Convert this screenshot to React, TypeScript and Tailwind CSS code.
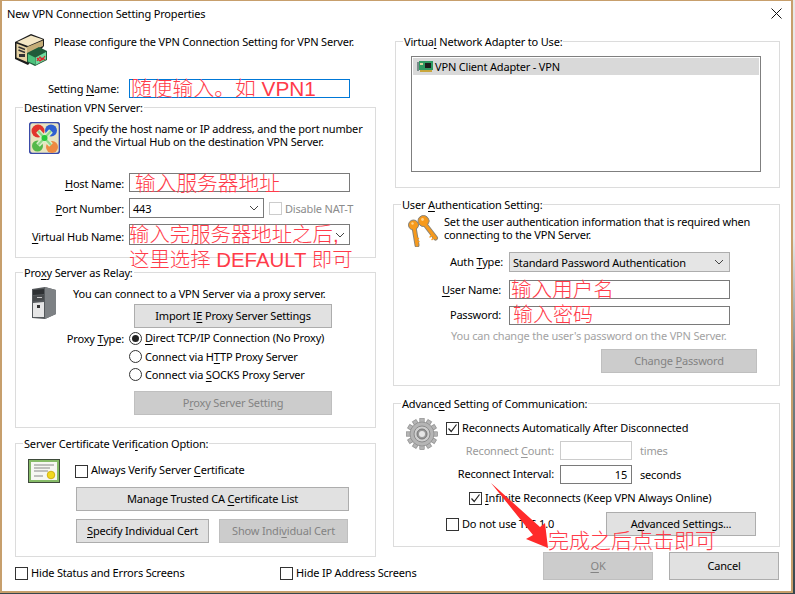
import React from "react";

const U = ({ children }: { children: React.ReactNode }) => <u className="underline underline-offset-[2px] decoration-1">{children}</u>;

const Note = ({ children, className = "" }: { children: React.ReactNode; className?: string }) => (
  <span className={"font-['Liberation_Sans','Noto_Sans_CJK_SC',sans-serif] font-light tracking-normal text-[#ff3b4a] whitespace-nowrap leading-[19px] " + className}>{children}</span>
);

const Group = ({ label, labelLeft = "left-[7px]", className = "", children }: { label: React.ReactNode; labelLeft?: string; className?: string; children?: React.ReactNode }) => (
  <div className={"relative border border-[#dcdcdc] " + className}>
    <div className={"absolute -top-[7px] bg-[#ffffff] px-[1px] whitespace-nowrap " + labelLeft}>{label}</div>
    {children}
  </div>
);

const Check = ({ checked = false, disabled = false }: { checked?: boolean; disabled?: boolean }) => (
  <div className={"w-[13px] h-[13px] shrink-0 border flex items-center justify-center " + (disabled ? "border-[#cccccc]" : "border-[#333333]")}>
    {checked && (
      <svg width="11" height="11" viewBox="0 0 11 11" fill="none">
        <path d="M1.5 5.5 L4.2 8.5 L9.5 1.5" stroke="#222222" strokeWidth="1.2" />
      </svg>
    )}
  </div>
);

const Radio = ({ on = false }: { on?: boolean }) => (
  <div className="w-[13px] h-[13px] shrink-0 rounded-full border border-[#333333] flex items-center justify-center">
    {on && <div className="w-[7px] h-[7px] rounded-full bg-[#222222]" />}
  </div>
);

const Btn = ({ children, disabled = false, className = "" }: { children: React.ReactNode; disabled?: boolean; className?: string }) => (
  <div className={"flex items-center justify-center border whitespace-nowrap pb-[2px] " + (disabled ? "bg-[#cccccc] border-[#bfbfbf] text-[#838383] " : "bg-[#e1e1e1] border-[#adadad] text-[#000000] ") + className}>
    <span>{children}</span>
  </div>
);

const Chevron = () => (
  <svg width="10" height="6" viewBox="0 0 10 6" fill="none" className="shrink-0">
    <path d="M1 1 L5 5 L9 1" stroke="#444444" strokeWidth="1" />
  </svg>
);

const ServerIcon = () => (
  <svg width="32" height="32" viewBox="0 0 32 32" className="shrink-0">
    <path d="M0 8 L16 0 L29 5 L29 12 L13 31 L0 25Z" fill="#1c1c1c" />
    <path d="M2 8 L16 1.5 L28 5.5 L13 12Z" fill="#f3e6c4" />
    <path d="M1.5 9.5 L12 13.5 L12 28 L1.5 23.5Z" fill="#e6d3a4" />
    <path d="M12 13 L28 6.5 L28 12 L12 20Z" fill="#c4ad78" />
    <path d="M3.5 13 L10 15.5 M3.5 16 L10 18.5" stroke="#333" strokeWidth="1.4" />
    <rect x="4" y="20" width="6" height="3" fill="#333" />
    <path d="M12 19 L24 13 L32 17 L32 26 L20 32 L12 28Z" fill="#1f5c3a" />
    <path d="M13 20 L20 23.5 L20 30.5 L13 27.5Z" fill="#4cc27c" />
    <path d="M20.5 23.5 L31 18 L31 25.5 L20.5 31Z" fill="#6fdc9e" />
    <path d="M22 27 L25 23 L27 26 L30 22 M22 24 L25 27 L27 24 L30 26" stroke="#e0202a" strokeWidth="1.2" fill="none" />
  </svg>
);

const HubIcon = () => (
  <svg width="31" height="32" viewBox="0 0 31 32" className="shrink-0">
    <rect x="0.5" y="0.5" width="30" height="31" rx="3" fill="#e9e4c0" stroke="#3a4aa8" strokeWidth="1.6" />
    <circle cx="9" cy="9" r="6.5" fill="#e2342d" />
    <circle cx="22" cy="8.5" r="6" fill="#2f5fd0" />
    <circle cx="8.5" cy="24" r="5.5" fill="#55b84a" />
    <circle cx="23" cy="25" r="6" fill="#ee8a42" />
    <path d="M9 9 L22 23 M22 9 L9 23" stroke="#d9efc8" strokeWidth="5" />
    <path d="M9 9 L22 23 M22 9 L9 23" stroke="#8fd88a" strokeWidth="2" />
    <circle cx="15.5" cy="16" r="3" fill="#27c83a" />
  </svg>
);

const TowerIcon = () => (
  <svg width="24" height="32" viewBox="0 0 24 32" className="shrink-0">
    <path d="M0 2 L13 0 L24 3 L24 27 L13 32 L0 31Z" fill="#55595c" />
    <path d="M13 0 L24 3 L24 27 L13 32Z" fill="#7d8184" />
    <path d="M1 3 L12 2 L12 7 L1 8Z" fill="#2e3133" />
    <path d="M1 9 L12 8 L12 13 L1 14Z" fill="#474a4c" />
    <path d="M1 16 L12 15 L12 30 L1 30Z" fill="#e6e6e6" />
    <rect x="5" y="18" width="3" height="3" fill="#333" />
    <rect x="5" y="10" width="5" height="1" fill="#c8c8c8" />
  </svg>
);

const CertIcon = () => (
  <svg width="32" height="24" viewBox="0 0 32 24" className="shrink-0">
    <rect x="0.5" y="0.5" width="31" height="23" fill="#ffffff" stroke="#3e4a3a" />
    <rect x="2" y="2" width="28" height="20" fill="#f6f7f2" stroke="#86bb68" strokeWidth="2" />
    <path d="M6 6 H26 M6 9 H22 M6 12 H20 M6 17 H15" stroke="#888888" strokeWidth="1" />
    <circle cx="23" cy="16" r="3.8" fill="#f2d81e" stroke="#c9a400" strokeWidth="0.8" />
  </svg>
);

const KeysIcon = () => (
  <svg width="32" height="32" viewBox="0 0 32 32" className="shrink-0" fill="none" strokeLinecap="round">
    <g stroke="#8d8576">
      <circle cx="6.5" cy="10" r="5" fill="#8d8576" />
      <path d="M7 12 L10 30" strokeWidth="5" />
      <circle cx="16.5" cy="6" r="5.5" fill="#8d8576" />
      <path d="M17 8 L28.5 23" strokeWidth="5" />
    </g>
    <g stroke="#f79a1c">
      <circle cx="6.5" cy="10" r="4" fill="#f79a1c" />
      <path d="M7 12 L10 30" strokeWidth="3" />
      <path d="M9 24 L11.5 23.5 M9.5 27 L12 26.5" strokeWidth="1.4" />
      <circle cx="16.5" cy="6" r="4.5" fill="#f79a1c" />
      <path d="M17 8 L28.5 23" strokeWidth="3" />
      <path d="M25 20 L23 22 M27 22.5 L25 24.5" strokeWidth="1.4" />
    </g>
    <circle cx="15.5" cy="4.5" r="1.4" fill="#ffd28a" />
    <circle cx="5.5" cy="8.5" r="1.2" fill="#ffd28a" />
  </svg>
);

const GearIcon = () => (
  <svg width="32" height="32" viewBox="0 0 32 32" className="shrink-0">
    <g fill="#b5b5b5" stroke="#808080" strokeWidth="0.6">
      {[0, 30, 60, 90, 120, 150, 180, 210, 240, 270, 300, 330].map((a) => (
        <rect key={a} x="13.8" y="0.5" width="4.4" height="6" transform={`rotate(${a} 16 16)`} />
      ))}
      <circle cx="16" cy="16" r="12" />
    </g>
    <circle cx="16" cy="16" r="8" fill="#cfcfcf" stroke="#8b8b8b" />
    <circle cx="16" cy="16" r="5" fill="#9a9a9a" stroke="#777777" />
    <circle cx="16" cy="16" r="3" fill="#e6e6e6" />
  </svg>
);

const NicIcon = () => (
  <svg width="16" height="11" viewBox="0 0 16 11" className="shrink-0">
    <rect x="0" y="1" width="2" height="9" fill="#7a8a8a" />
    <rect x="2" y="0" width="14" height="9" fill="#2f9a62" />
    <rect x="8" y="2" width="6" height="5" fill="#1d1d1d" />
    <rect x="3" y="2" width="3" height="2" fill="#d8d8a0" />
    <rect x="3" y="9" width="12" height="2" fill="#c9a63c" />
  </svg>
);

export default function App() {
  return (
    <div className="relative w-[795px] h-[594px] overflow-hidden bg-[linear-gradient(180deg,#e8e8e8_0%,#e8e8e8_40%,#7c8a8e_60%,#36464c_100%)] font-['Noto_Sans','Liberation_Sans',sans-serif] text-[11px] tracking-[-0.18px] leading-[13px] text-[#000000]">
      <div className="w-[793px] h-[593px] box-border border-l-2 border-r-2 border-t border-b-2 border-[#c79f6c] bg-[#ffffff]">
        <div className="h-[27px] flex items-center justify-between pl-[5px] pr-[9px] pb-[3px]">
          <span>New VPN Connection Setting Properties</span>
          <svg width="11" height="11" viewBox="0 0 11 11" fill="none">
            <path d="M0.5 0.5 L10.5 10.5 M10.5 0.5 L0.5 10.5" stroke="#111111" strokeWidth="1" />
          </svg>
        </div>

        <div className="flex">
          {/* Left column */}
          <div className="ml-[13px] w-[361px] shrink-0">
            <div className="flex items-start gap-[7px] mt-[6px] h-[32px]">
              <ServerIcon />
              <div className="mt-[1px] whitespace-nowrap">Please configure the VPN Connection Setting for VPN Server.</div>
            </div>

            <div className="flex items-center h-[19px] mt-[13px]">
              <div className="w-[104px] text-right">Setting <U>N</U>ame:</div>
              <div className="ml-[10px] w-[221px] h-[19px] border border-[#0078d7] flex items-center pl-[1px] text-[20.8px]">
                <Note>随便输入。如 VPN1</Note>
              </div>
            </div>

            <Group className="mt-[9px] h-[151px]" label="Destination VPN Server:">
              <div className="flex mt-[14px] ml-[13px] gap-[13px]">
                <HubIcon />
                <div className="whitespace-nowrap">
                  Specify the host name or IP address, and the port number
                  <br />
                  and the Virtual Hub on the destination VPN Server.
                </div>
              </div>
              <div className="flex items-center mt-[19px] h-[19px]">
                <div className="w-[108px] text-right pt-[1px]"><U>H</U>ost Name:</div>
                <div className="ml-[5px] w-[221px] h-[19px] border border-[#7a7a7a] flex items-center pl-[5px] text-[20.7px]">
                  <Note className="mt-[2px]">输入服务器地址</Note>
                </div>
              </div>
              <div className="flex items-center mt-[6px] h-[20px]">
                <div className="w-[108px] text-right pt-[1px]"><U>P</U>ort Number:</div>
                <div className="ml-[5px] w-[135px] h-[20px] border border-[#7a7a7a] flex items-center justify-between pl-[3px] pr-[4px]">
                  <span>443</span>
                  <Chevron />
                </div>
                <div className="ml-[5px]"><Check disabled /></div>
                <span className="ml-[3px] whitespace-nowrap text-[#8c8c8c]">Disable NAT-T</span>
              </div>
              <div className="flex items-center mt-[6px] h-[21px]">
                <div className="w-[108px] text-right pt-[4px]"><U>V</U>irtual Hub Name:</div>
                <div className="relative ml-[5px] w-[221px] h-[21px] border border-[#7a7a7a] flex items-center justify-end pr-[4px]">
                  <Chevron />
                  <Note className="absolute left-[-1px] top-[1px] text-[20.4px]">输入完服务器地址之后,</Note>
                  <Note className="absolute left-[-1px] top-[26px] text-[20.4px]">这里选择 DEFAULT 即可</Note>
                </div>
              </div>
            </Group>

            <Group className="mt-[14px] h-[156px]" label={<>Pro<U>x</U>y Server as Relay:</>}>
              <div className="flex items-start mt-[14px] ml-[16px]">
                <TowerIcon />
                <div className="ml-[17px]">
                  <div className="whitespace-nowrap">You can connect to a VPN Server via a proxy server.</div>
                  <Btn className="ml-[61px] mt-[4px] w-[198px] h-[24px]">Import I<U>E</U> Proxy Server Settings</Btn>
                </div>
              </div>
              <div className="flex items-center mt-[4px] h-[13px]">
                <div className="w-[108px] text-right">Proxy <U>T</U>ype:</div>
                <div className="ml-[5px]"><Radio on /></div>
                <span className="ml-[3px] whitespace-nowrap pb-[2px]"><U>D</U>irect TCP/IP Connection (No Proxy)</span>
              </div>
              <div className="flex items-center mt-[5px] h-[13px] pl-[113px]">
                <Radio />
                <span className="ml-[3px] whitespace-nowrap">Connect via H<U>T</U>TP Proxy Server</span>
              </div>
              <div className="flex items-center mt-[5px] h-[13px] pl-[113px]">
                <Radio />
                <span className="ml-[3px] whitespace-nowrap">Connect via <U>S</U>OCKS Proxy Server</span>
              </div>
              <Btn disabled className="ml-[118px] mt-[10px] w-[198px] h-[24px]">P<U>r</U>oxy Server Setting</Btn>
            </Group>

            <Group className="mt-[15px] h-[114px]" label={<>Server Certificate Verif<U>i</U>cation Option:</>}>
              <div className="flex items-center mt-[15px] ml-[12px]">
                <CertIcon />
                <div className="ml-[15px]"><Check /></div>
                <span className="ml-[3px] whitespace-nowrap pb-[3px]">Always Verify Server <U>C</U>ertificate</span>
              </div>
              <Btn className="ml-[60px] mt-[4px] w-[273px] h-[24px]">Manage Trusted CA <U>C</U>ertificate List</Btn>
              <div className="flex ml-[60px] mt-[8px] gap-[10px]">
                <Btn className="w-[133px] h-[24px]"><U>S</U>pecify Individual Cert</Btn>
                <Btn disabled className="w-[129px] h-[24px]">Show Indi<U>v</U>idual Cert</Btn>
              </div>
            </Group>

            <div className="flex items-center mt-[10px] h-[13px] whitespace-nowrap">
              <div className="flex items-center w-[265px] shrink-0">
                <Check />
                <span className="ml-[3px] pb-[2px]">Hide Status and Errors Screens</span>
              </div>
              <Check />
              <span className="ml-[3px] pb-[2px]">Hide IP Address Screens</span>
            </div>
          </div>

          {/* Right column */}
          <div className="ml-[17px] w-[387px] shrink-0">
            <Group className="ml-[2px] mt-[13px] h-[147px] w-[385px]" label={<>Virtua<U>l</U> Network Adapter to Use:</>}>
              <div className="ml-[15px] mt-[14px] w-[350px] h-[116px] border border-[#7f7f7f] p-[1px]">
                <div className="h-[17px] bg-[#d9d9d9] flex items-center pl-[4px] gap-[2px]">
                  <NicIcon />
                  <span className="whitespace-nowrap">VPN Client Adapter - VPN</span>
                </div>
              </div>
            </Group>

            <Group className="mt-[16px] h-[182px]" label={<>User <U>A</U>uthentication Setting:</>}>
              <div className="flex mt-[10px] ml-[13px] gap-[5px] h-[32px]">
                <KeysIcon />
                <div className="whitespace-nowrap">
                  Set the user authentication information that is required when
                  <br />
                  connecting to the VPN Server.
                </div>
              </div>
              <div className="flex items-center mt-[5px] h-[20px]">
                <div className="w-[109px] text-right pb-[2px]">Auth <U>T</U>ype:</div>
                <div className="ml-[6px] w-[221px] h-[20px] border border-[#adadad] bg-[#e5e5e5] flex items-center justify-between pl-[3px] pr-[5px]">
                  <span className="whitespace-nowrap">Standard Password Authentication</span>
                  <Chevron />
                </div>
              </div>
              <div className="flex items-center mt-[8px] h-[19px]">
                <div className="w-[107px] text-right"><U>U</U>ser Name:</div>
                <div className="ml-[8px] w-[221px] h-[19px] border border-[#7a7a7a] flex items-center pl-[1px] text-[20.6px]">
                  <Note>输入用户名</Note>
                </div>
              </div>
              <div className="flex items-center mt-[7px] h-[19px]">
                <div className="w-[107px] text-right pb-[2px]">Password:</div>
                <div className="ml-[8px] w-[221px] h-[19px] border border-[#7a7a7a] flex items-center pl-[3px] text-[20px]">
                  <Note>输入密码</Note>
                </div>
              </div>
              <div className="ml-[57px] mt-[4px] whitespace-nowrap text-[#a3a3a3]">You can change the user's password on the VPN Server.</div>
              <Btn disabled className="ml-[207px] mt-[7px] w-[156px] h-[24px]">Change <U>P</U>assword</Btn>
            </Group>

            <Group className="mt-[17px] h-[144px]" label={<>Advanc<U>e</U>d Setting of Communication:</>}>
              <div className="flex items-start">
                <div className="ml-[12px] mt-[14px]"><GearIcon /></div>
                <div className="ml-[8px] mt-[18px] w-[310px]">
                  <div className="flex items-center h-[13px]">
                    <Check checked />
                    <span className="ml-[3px] whitespace-nowrap pb-[2px]">Reconnects Automatically After Disconnected</span>
                  </div>
                  <div className="flex items-center mt-[6px] h-[19px]">
                    <div className="w-[108px] text-right text-[#9a9a9a] whitespace-nowrap">Reconnect <U>C</U>ount:</div>
                    <div className="ml-[6px] w-[72px] h-[19px] border border-[#cccccc]" />
                    <span className="ml-[8px] text-[#9a9a9a]">times</span>
                  </div>
                  <div className="flex items-center mt-[5px] h-[19px]">
                    <div className="w-[108px] text-right whitespace-nowrap pb-[2px]">Reconnect Interval:</div>
                    <div className="ml-[6px] w-[72px] h-[19px] border border-[#7a7a7a] flex items-center justify-end pr-[4px]">15</div>
                    <span className="ml-[8px] pb-[1px]">seconds</span>
                  </div>
                  <div className="flex items-center mt-[8px] ml-[23px] h-[13px]">
                    <Check checked />
                    <span className="ml-[3px] whitespace-nowrap pb-[2px]"><U>I</U>nfinite Reconnects (Keep VPN Always Online)</span>
                  </div>
                  <div className="flex items-center mt-[7px] h-[24px]">
                    <Check />
                    <span className="ml-[3px] whitespace-nowrap pb-[2px]">Do not use TLS <U>1</U>.0</span>
                    <Btn className="ml-auto w-[150px] h-[24px]">A<U>d</U>vanced Settings...</Btn>
                  </div>
                </div>
              </div>
            </Group>

            <div className="flex justify-end gap-[16px] mt-[5px] pr-[1px]">
              <Btn disabled className="w-[110px] h-[28px]"><U>O</U>K</Btn>
              <Btn className="w-[110px] h-[28px]">Cancel</Btn>
            </div>
          </div>
        </div>
      </div>

      {/* Hand-drawn arrow and caption laid over the dialog */}
      <svg className="absolute left-0 top-0 pointer-events-none" width="795" height="594" viewBox="0 0 795 594">
        <path d="M491 483 L540 527 L545 523 L548 548 L526 539 L533 535 Z" fill="#ff2a2a" />
      </svg>
      <Note className="absolute left-[548px] top-[531px] text-[21px]">完成之后点击即可</Note>
    </div>
  );
}
